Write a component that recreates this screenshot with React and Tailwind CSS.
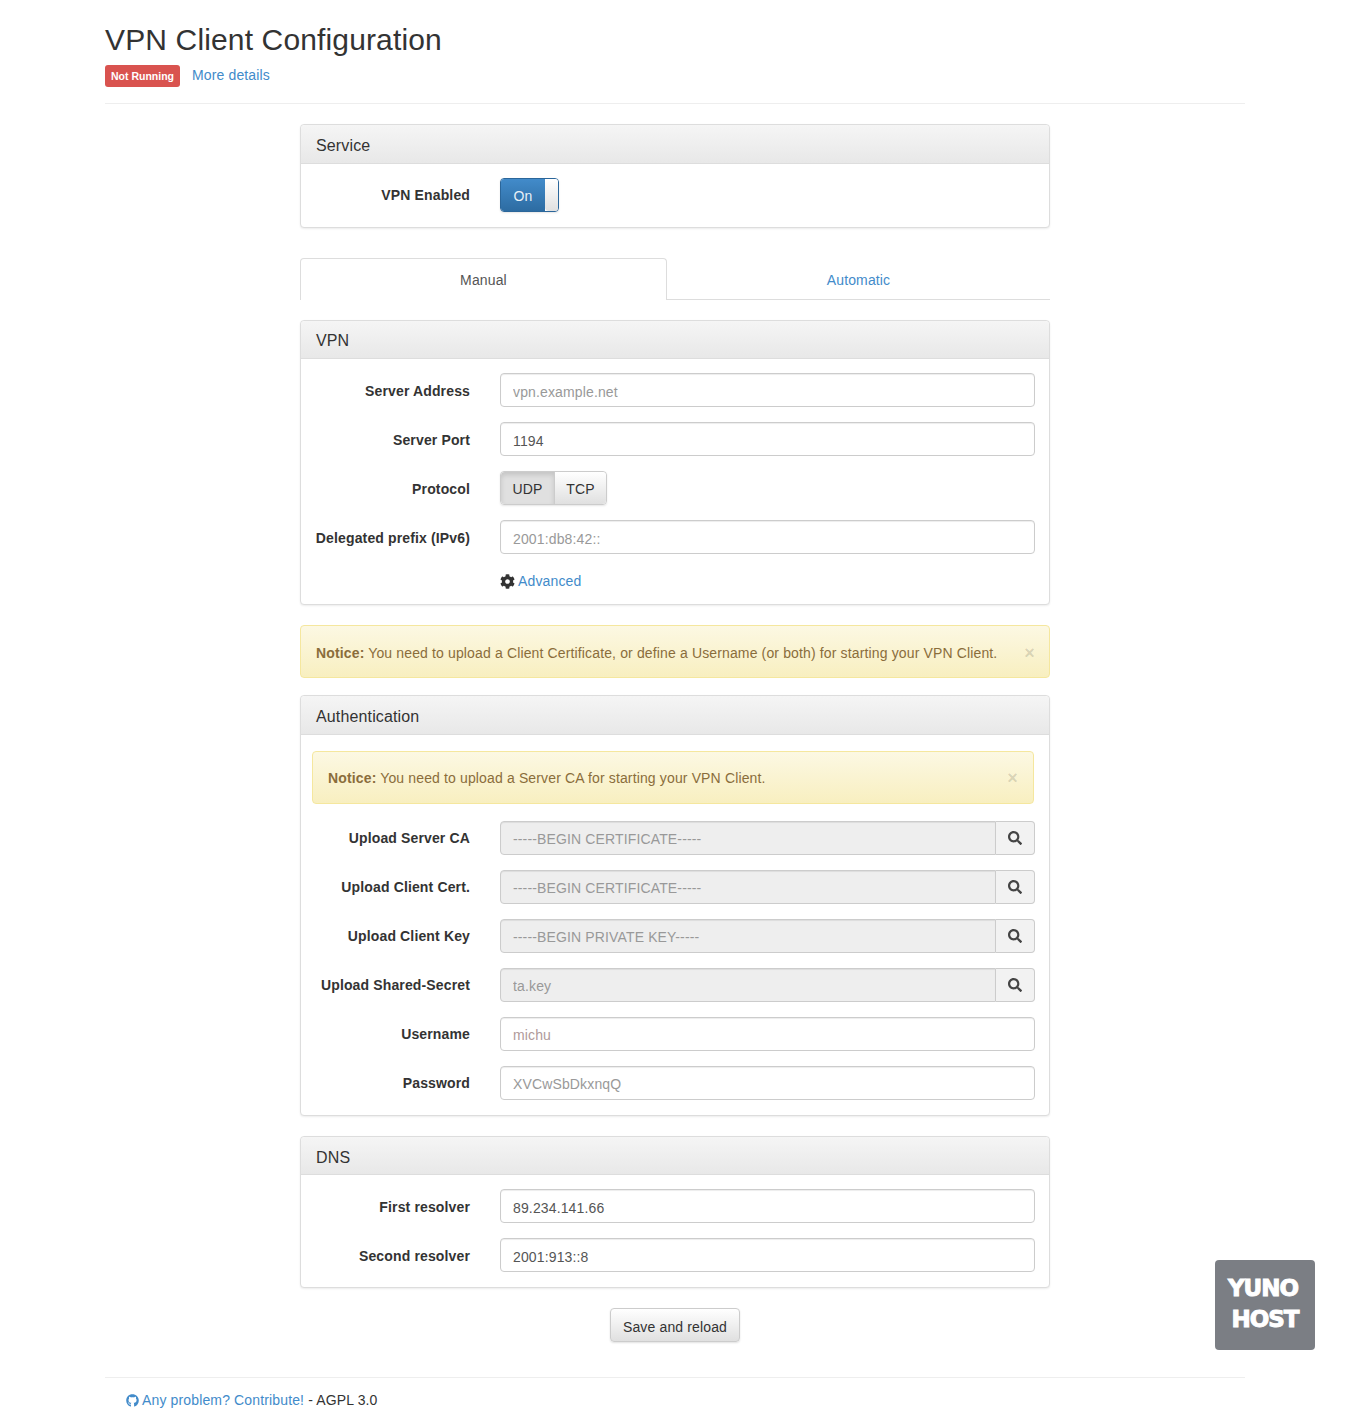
import React from 'react';
import { FaCog, FaGithub, FaSearch } from 'react-icons/fa';

const Panel = ({ title, heading = 'h-[39px] pt-[4px]', children }) => (
  <section className="rounded border border-[#ddd] bg-white shadow-[0_1px_2px_rgba(0,0,0,0.075)]">
    <div className={`${heading} flex items-center rounded-t border-b border-[#ddd] bg-gradient-to-b from-[#f5f5f5] to-[#e8e8e8] px-[15px] text-base text-[#333]`}>
      {title}
    </div>
    {children}
  </section>
);

const Row = ({ label, drop, children }) => (
  <div className="flex items-center pr-[14px]">
    <label className={`w-[169px] shrink-0 text-right font-bold text-[#333] ${drop ? 'pt-[2px]' : ''}`}>{label}</label>
    <div className="ml-[30px] min-w-0 flex-1">{children}</div>
  </div>
);

const TextField = ({ value, placeholder, tint, drop }) => (
  <input
    readOnly
    value={value || ''}
    placeholder={placeholder}
    className={`block h-[34px] w-full rounded border border-[#ccc] bg-white px-3 text-[#555] shadow-[inset_0_1px_1px_rgba(0,0,0,0.075)] outline-none ${drop ? 'pt-[4px]' : 'pt-[2px]'} ${tint || 'placeholder:text-[#999]'}`}
  />
);

const FileField = ({ placeholder }) => (
  <div className="flex h-[34px] w-full">
    <input
      readOnly
      placeholder={placeholder}
      className="block h-full min-w-0 flex-1 rounded-l border border-[#ccc] bg-[#eee] px-3 pt-[2px] shadow-[inset_0_1px_1px_rgba(0,0,0,0.075)] outline-none placeholder:text-[#999]"
    />
    <button className="flex w-[39px] items-center justify-center rounded-r border border-l-0 border-[#ccc] bg-[#f2f2f2] text-[#444]">
      <FaSearch size={14} />
    </button>
  </div>
);

const Notice = ({ children, className }) => (
  <div className={`flex h-[53px] items-center justify-between rounded border border-[#f5e79e] bg-gradient-to-b from-[#fcf8e3] to-[#f8efc0] text-[#8a6d3b] shadow-[0_1px_0_rgba(255,255,255,0.25)] ${className || ''}`}>
    <p><strong>Notice:</strong> {children}</p>
    <span className="text-[18px] leading-none font-bold text-black/15">×</span>
  </div>
);

export default function App() {
  return (
    <div className="relative mx-auto min-h-[1428px] w-[1140px] font-['Liberation_Sans',Arial,sans-serif] text-sm leading-5 tracking-[0.14px] text-[#333]">
      {/* Header */}
      <header className="flex h-[104px] flex-col border-b border-[#eee] pt-[23px]">
        <h1 className="text-[30px] leading-[33px] font-normal">VPN Client Configuration</h1>
        <div className="mt-[9px] flex items-center">
          <span className="flex h-[22px] w-[75px] items-center justify-center rounded-[3px] bg-[#d9534f] text-[10.5px] font-bold tracking-normal text-white">
            Not Running
          </span>
          <a className="ml-3 -translate-y-[1px] text-[#428bca]">More details</a>
        </div>
      </header>

      <main className="mx-auto mt-5 w-[750px]">
        {/* Service */}
        <Panel title="Service">
          <div className="pt-[14px] pb-[15px]">
            <Row label="VPN Enabled">
              <div className="flex h-[34px] w-[59px] overflow-hidden rounded border border-[#2b669a] shadow-[0_1px_2px_rgba(0,0,0,0.1)]">
                <div className="flex flex-1 items-center justify-center bg-gradient-to-b from-[#428bca] to-[#2d6ca2] pt-[1px] text-[#e8f0f7]">On</div>
                <div className="w-[13px] rounded-l bg-gradient-to-b from-white to-[#e0e0e0]" />
              </div>
            </Row>
          </div>
        </Panel>

        {/* Tabs */}
        <nav className="mt-[30px] flex h-[42px] items-stretch">
          <a className="flex w-[367px] items-center justify-center rounded-t border border-b-0 border-[#ddd] text-[#555]">Manual</a>
          <a className="flex flex-1 items-center justify-center border-b border-[#ddd] pt-[3px] text-[#428bca]">Automatic</a>
        </nav>

        {/* VPN */}
        <div className="mt-5">
          <Panel title="VPN" heading="h-[38px] pt-[2px]">
            <div className="flex flex-col gap-[15px] pt-[14px] pb-[13px]">
              <Row drop label="Server Address"><TextField drop placeholder="vpn.example.net" /></Row>
              <Row drop label="Server Port"><TextField drop value="1194" /></Row>
              <Row drop label="Protocol">
                <div className="flex h-[34px] w-[107px] rounded border border-[#ccc] shadow-[0_1px_2px_rgba(0,0,0,0.1)]">
                  <div className="flex w-[54px] items-center justify-center rounded-l border-r border-[#ccc] bg-[#e0e0e0] pt-[1px] shadow-[inset_0_3px_5px_rgba(0,0,0,0.125)]">UDP</div>
                  <div className="flex flex-1 items-center justify-center rounded-r bg-gradient-to-b from-white to-[#e0e0e0] pt-[1px]">TCP</div>
                </div>
              </Row>
              <Row drop label="Delegated prefix (IPv6)"><TextField drop placeholder="2001:db8:42::" /></Row>
              <Row label="">
                <div className="mt-[2px] flex items-center gap-[3px]">
                  <FaCog size={15} className="text-[#333]" />
                  <a className="text-[#428bca]">Advanced</a>
                </div>
              </Row>
            </div>
          </Panel>
        </div>

        <Notice className="mt-5 pt-[2px] pr-[14px] pl-[15px]">You need to upload a Client Certificate, or define a Username (or both) for starting your VPN Client.</Notice>

        {/* Authentication */}
        <div className="mt-[17px]">
          <Panel title="Authentication">
            <div className="pl-[11px] pr-[15px] pt-[16px] pb-[17px]">
              <Notice className="px-[15px]">You need to upload a Server CA for starting your VPN Client.</Notice>
            </div>
            <div className="flex flex-col gap-[15px] pb-[15px]">
              <Row label="Upload Server CA"><FileField placeholder="-----BEGIN CERTIFICATE-----" /></Row>
              <Row label="Upload Client Cert."><FileField placeholder="-----BEGIN CERTIFICATE-----" /></Row>
              <Row label="Upload Client Key"><FileField placeholder="-----BEGIN PRIVATE KEY-----" /></Row>
              <Row label="Upload Shared-Secret"><FileField placeholder="ta.key" /></Row>
              <Row label="Username"><TextField placeholder="michu" tint="placeholder:text-[#b09a9a]" /></Row>
              <Row label="Password"><TextField placeholder="XVCwSbDkxnqQ" /></Row>
            </div>
          </Panel>
        </div>

        {/* DNS */}
        <div className="mt-5">
          <Panel title="DNS" heading="h-[38px] pt-[4px]">
            <div className="flex flex-col gap-[15px] pt-[14px] pb-[15px]">
              <Row drop label="First resolver"><TextField drop value="89.234.141.66" /></Row>
              <Row drop label="Second resolver"><TextField drop value="2001:913::8" /></Row>
            </div>
          </Panel>
        </div>

        <div className="mt-5 flex justify-center">
          <button className="h-[34px] w-[130px] rounded border border-[#ccc] bg-gradient-to-b from-white to-[#e0e0e0] pt-[3px] text-[#333] shadow-[0_1px_2px_rgba(0,0,0,0.12)]">
            Save and reload
          </button>
        </div>
      </main>

      {/* Footer */}
      <footer className="mt-[35px] border-t border-[#eee] pt-[12px] pl-[21px]">
        <a className="text-[#428bca]"><FaGithub size={13} className="mr-[3px] inline-block -translate-y-[1px]" />Any problem? Contribute!</a> - AGPL 3.0
      </footer>

      {/* YunoHost logo */}
      <div className="absolute top-[1260px] left-[1110px] flex h-[90px] w-[100px] flex-col items-center justify-center gap-[5px] rounded bg-[#7b7e84] pb-[3px] font-['DejaVu_Sans',sans-serif] text-[23px] leading-[26px] font-bold tracking-[-1px] text-white [-webkit-text-stroke:1px_white]">
        <span className="-translate-x-[2px]">YUNO</span>
        <span>HOST</span>
      </div>
    </div>
  );
}
